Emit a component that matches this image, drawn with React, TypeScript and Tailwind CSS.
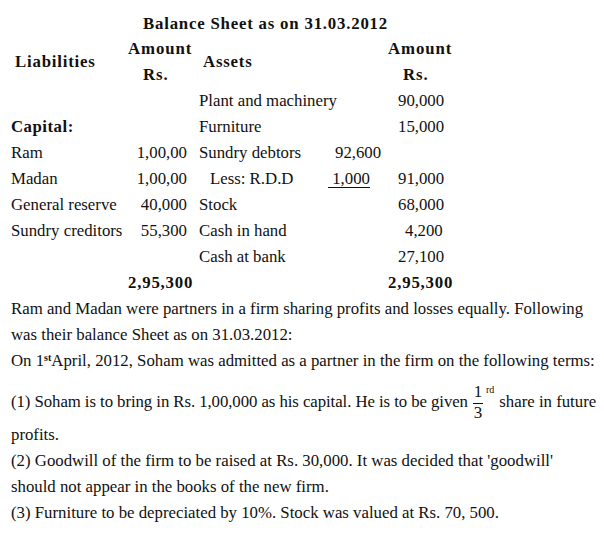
import React from "react";

const F = { fontFamily: '"Liberation Serif", "Times New Roman", serif' };

function Row({ children }: { children: React.ReactNode }) {
  return <div className="contents">{children}</div>;
}

export default function App() {
  const rows: [string, string, string, string, string][] = [
    ["", "", "Plant and machinery", "", "90,000"],
    ["Capital:", "", "Furniture", "", "15,000"],
    ["Ram", "1,00,00", "Sundry debtors", "92,600", ""],
    ["Madan", "1,00,00", "Less: R.D.D", "1,000", "91,000"],
    ["General reserve", "40,000", "Stock", "", "68,000"],
    ["Sundry creditors", "55,300", "Cash in hand", "", "4,200"],
    ["", "", "Cash at bank", "", "27,100"],
  ];
  return (
    <div
      className="w-[604px] h-[541px] bg-white text-[#111] text-[16.8px] leading-[26px] pl-[11px] pt-[10px]"
      style={F}
    >
      <div className="h-[26px] pl-[132px] pt-[1px] font-bold tracking-[0.8px]">Balance Sheet as on 31.03.2012</div>
      <div className="grid grid-cols-[116px_68px_133px_60px_72px]">
        {/* header */}
        <div className="h-[52px] flex items-center pl-[4px] font-bold tracking-[0.8px]">Liabilities</div>
        <div className="h-[52px] flex flex-col font-bold tracking-[0.9px]">
          <div className="pl-[1px]">Amount</div>
          <div className="pl-[16px]">Rs.</div>
        </div>
        <div className="h-[52px] flex items-center pl-[8px] font-bold tracking-[0.8px]">Assets</div>
        <div />
        <div className="h-[52px] flex flex-col font-bold tracking-[0.9px]">
          <div className="pl-[0px]">Amount</div>
          <div className="pl-[15px]">Rs.</div>
        </div>
        {rows.map((r, i) => (
          <Row key={i}>
            <div className={"h-[26px] whitespace-nowrap " + (r[0] === "Capital:" ? "font-bold tracking-[0.5px]" : "")}>
              {r[0]}
            </div>
            <div className="h-[26px] text-right pr-[8px] whitespace-nowrap">{r[1]}</div>
            <div className={"h-[26px] whitespace-nowrap " + (r[2] === "Less: R.D.D" ? "pl-[15px]" : "pl-[4px]")}>
              {r[2]}
            </div>
            <div className="h-[26px] whitespace-nowrap">
              {r[3] === "1,000" ? (
                <span className="underline underline-offset-[3px]">&nbsp;1,000</span>
              ) : r[3] ? (
                <span className="pl-[7px]">{r[3]}</span>
              ) : null}
            </div>
            <div className={"h-[26px] whitespace-nowrap " + (r[4] === "4,200" ? "pl-[17px]" : "pl-[10px]")}>
              {r[4]}
            </div>
          </Row>
        ))}
        <div className="h-[26px]" />
        <div className="h-[26px] font-bold tracking-[0.8px] pl-[1px] whitespace-nowrap">2,95,300</div>
        <div />
        <div />
        <div className="h-[26px] font-bold tracking-[0.8px] whitespace-nowrap">2,95,300</div>
      </div>
      <div>
        <p className="whitespace-nowrap">Ram and Madan were partners in a firm sharing profits and losses equally. Following</p>
        <p>was their balance Sheet as on 31.03.2012:</p>
        <p className="whitespace-nowrap">
          On 1<sup className="text-[10px] font-bold">st</sup>April, 2012, Soham was admitted as a partner in the firm on the following terms:
        </p>
        <div className="h-[48px] flex items-center pt-[8px] whitespace-nowrap">
          <span className="tracking-[-0.07px]">(1) Soham is to bring in Rs. 1,00,000 as his capital. He is to be given</span>
          <span className="inline-flex flex-col items-center ml-[5px] text-[17px] leading-[17px]">
            <span className="mb-[3px]">1</span>
            <span className="w-[10px] h-[1px] bg-[#111]" />
            <span>3</span>
          </span>
          <span className="self-start mt-[3px] ml-[3px] text-[10px] leading-[10px]">rd</span>
          <span className="ml-[5px]">share in future</span>
        </div>
        <p>profits.</p>
        <p>(2) Goodwill of the firm to be raised at Rs. 30,000. It was decided that 'goodwill'</p>
        <p>should not appear in the books of the new firm.</p>
        <p>(3) Furniture to be depreciated by 10%. Stock was valued at Rs. 70, 500.</p>
      </div>
    </div>
  );
}
